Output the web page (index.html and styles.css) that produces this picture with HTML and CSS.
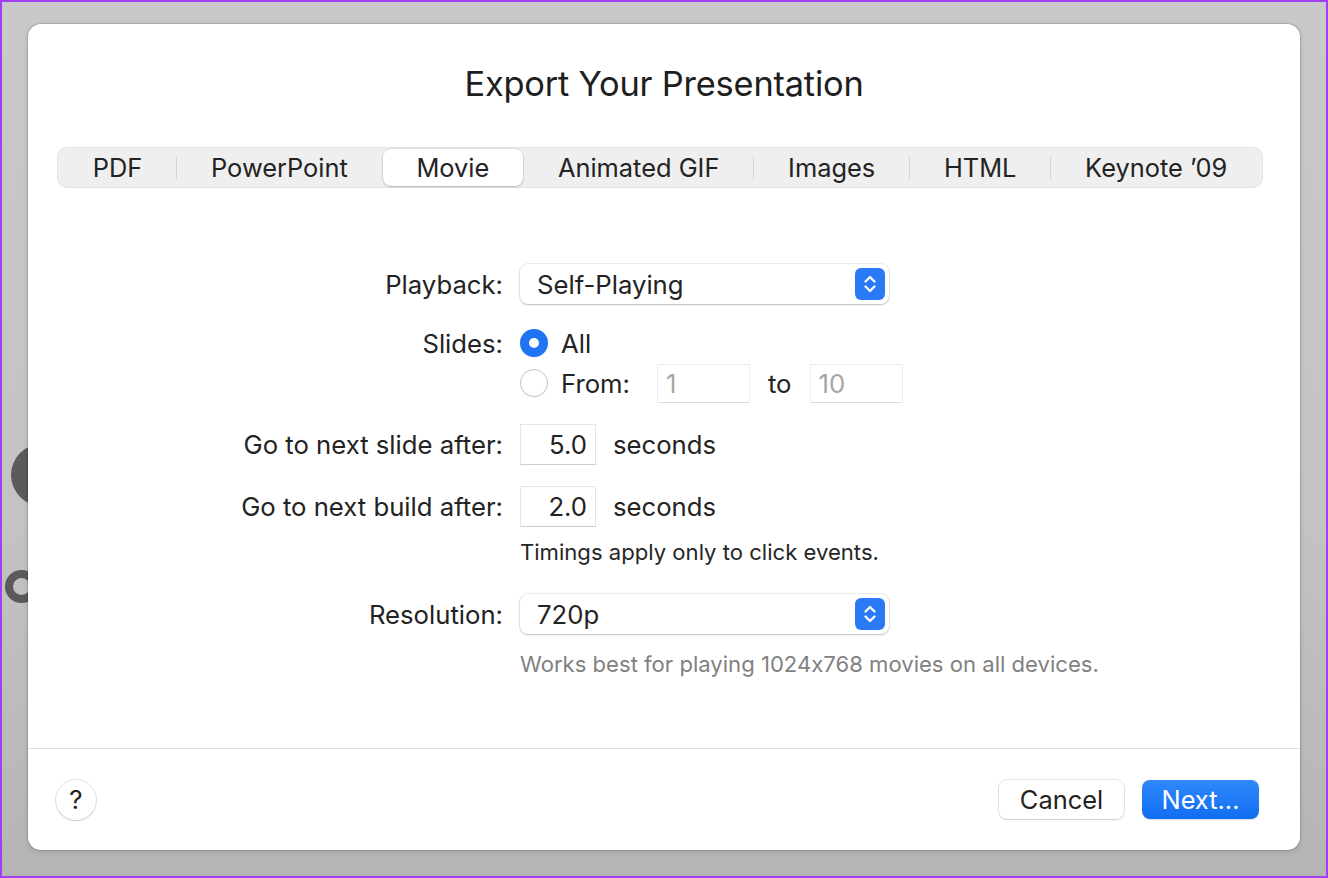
FILE: index.html
```html
<!DOCTYPE html>
<html lang="en">
<head>
<meta charset="utf-8">
<title>Export Your Presentation</title>
<link rel="stylesheet" href="styles.css">
</head>
<body>
<div class="screen">
  <div class="bg-dot"></div>
  <div class="bg-ring"></div>
  <div class="dialog">
    <h1 class="title">Export Your Presentation</h1>

    <div class="tabs">
      <div class="tab">PDF</div>
      <div class="sep"></div>
      <div class="tab">PowerPoint</div>
      <div class="sep sep-hidden"></div>
      <div class="tab tab-selected">Movie</div>
      <div class="sep sep-hidden"></div>
      <div class="tab">Animated GIF</div>
      <div class="sep"></div>
      <div class="tab">Images</div>
      <div class="sep"></div>
      <div class="tab">HTML</div>
      <div class="sep"></div>
      <div class="tab">Keynote ’09</div>
    </div>

    <div class="form">
      <div class="row row-popup">
        <div class="label">Playback:</div>
        <div class="popup">
          <span class="popup-text">Self-Playing</span>
          <svg class="popup-arrows" width="30" height="32" viewBox="0 0 30 32">
            <rect x="0" y="0" width="30" height="32" rx="6" fill="#2a7af5"/>
            <path d="M10.5 13.5 L15 9 L19.5 13.5" fill="none" stroke="#fff" stroke-width="2.3" stroke-linecap="round" stroke-linejoin="round"/>
            <path d="M10.5 18.5 L15 23 L19.5 18.5" fill="none" stroke="#fff" stroke-width="2.3" stroke-linecap="round" stroke-linejoin="round"/>
          </svg>
        </div>
      </div>

      <div class="row row-radio row-all">
        <div class="label">Slides:</div>
        <div class="radio radio-on"></div>
        <span class="radio-text">All</span>
      </div>

      <div class="row row-radio">
        <div class="label"></div>
        <div class="radio"></div>
        <span class="radio-text">From:</span>
        <div class="field field-range field-from field-disabled">1</div>
        <span class="to">to</span>
        <div class="field field-range field-disabled">10</div>
      </div>

      <div class="row row-field row-slide">
        <div class="label">Go to next slide after:</div>
        <div class="field field-num">5.0</div>
        <span class="unit">seconds</span>
      </div>

      <div class="row row-field row-build">
        <div class="label">Go to next build after:</div>
        <div class="field field-num">2.0</div>
        <span class="unit">seconds</span>
      </div>

      <p class="note note-dark">Timings apply only to click events.</p>

      <div class="row row-popup row-res">
        <div class="label">Resolution:</div>
        <div class="popup">
          <span class="popup-text">720p</span>
          <svg class="popup-arrows" width="30" height="32" viewBox="0 0 30 32">
            <rect x="0" y="0" width="30" height="32" rx="6" fill="#2a7af5"/>
            <path d="M10.5 13.5 L15 9 L19.5 13.5" fill="none" stroke="#fff" stroke-width="2.3" stroke-linecap="round" stroke-linejoin="round"/>
            <path d="M10.5 18.5 L15 23 L19.5 18.5" fill="none" stroke="#fff" stroke-width="2.3" stroke-linecap="round" stroke-linejoin="round"/>
          </svg>
        </div>
      </div>

      <p class="note note-gray">Works best for playing 1024x768 movies on all devices.</p>
    </div>

    <div class="footer">
      <div class="help">?</div>
      <div class="spacer"></div>
      <div class="btn btn-cancel">Cancel</div>
      <div class="btn btn-next">Next...</div>
    </div>
  </div>
</div>
</body>
</html>
```

FILE: styles.css
```css
* { box-sizing: border-box; }

html, body {
  margin: 0;
  padding: 0;
}

body {
  width: 1328px;
  height: 878px;
  overflow: hidden;
  font-family: "Inter", "Liberation Sans", sans-serif;
  font-feature-settings: "calt" 0;
  color: #232323;
}

.screen {
  position: relative;
  width: 1328px;
  height: 878px;
  border: 2px solid #a040f2;
  padding: 22px 0 0 26px;
  background: linear-gradient(to bottom, #c9c9c9 0%, #c3c3c3 60%, #b5b5b5 100%);
}

.bg-dot {
  position: absolute;
  left: 9px;
  top: 442px;
  width: 62px;
  height: 62px;
  border-radius: 50%;
  background: #5b5b5b;
}

.bg-ring {
  position: absolute;
  left: 3px;
  top: 568px;
  width: 33px;
  height: 33px;
  border-radius: 50%;
  border: 8px solid #5a5a5a;
}

.dialog {
  position: relative;
  z-index: 1;
  width: 1272px;
  height: 826px;
  background: #ffffff;
  border-radius: 13px;
  box-shadow: 0 0 0 1px rgba(0, 0, 0, 0.12), 0 2px 6px rgba(0, 0, 0, 0.12);
  display: flex;
  flex-direction: column;
}

.title {
  margin: 0;
  padding-top: 40px;
  height: 80px;
  font-size: 34.4px;
  line-height: 40px;
  font-weight: 400;
  text-align: center;
  color: #1e1e1e;
  letter-spacing: -0.2px;
}

.tabs {
  flex: none;
  margin: 43px 37px 0 29px;
  height: 41px;
  display: flex;
  align-items: center;
  background: #efefef;
  border: 1px solid #e3e3e3;
  border-radius: 10px;
  padding: 0 1px;
}

.tab {
  flex: 1 1 auto;
  padding: 0 29px;
  height: 37px;
  display: flex;
  align-items: center;
  justify-content: center;
  font-size: 25.4px;
  color: #232323;
  white-space: nowrap;
}

.tab-selected {
  background: #ffffff;
  border-radius: 8px;
  box-shadow: 0 0 0 0.5px rgba(0, 0, 0, 0.14), 0 1px 2px rgba(0, 0, 0, 0.18);
}

.sep {
  flex: none;
  width: 1px;
  height: 22px;
  background: #d2d2d2;
}

.sep-hidden {
  background: transparent;
}

.form {
  flex: 1;
  padding-top: 76px;
}

.row {
  display: flex;
  align-items: center;
  font-size: 25.7px;
}

.label {
  flex: none;
  width: 475px;
  margin-right: 17px;
  text-align: right;
  white-space: nowrap;
}

.row-popup { height: 40px; }
.row-radio { height: 40px; }
.row-all { margin-top: 19px; }
.row-field { height: 41px; margin-top: 21px; }
.row-res { margin-top: 30px; }

.popup {
  width: 369px;
  height: 40px;
  background: #ffffff;
  border-radius: 8px;
  box-shadow: 0 0 0 1px rgba(0, 0, 0, 0.07), 0 1px 2px rgba(0, 0, 0, 0.2);
  display: flex;
  align-items: center;
  padding: 0 4px 0 17px;
}

.popup-text {
  flex: 1;
}

.popup-arrows {
  flex: none;
  display: block;
}

.radio {
  flex: none;
  width: 28px;
  height: 28px;
  border-radius: 50%;
  background: #ffffff;
  border: 1px solid #c6c6c6;
  box-shadow: 0 0.5px 1px rgba(0, 0, 0, 0.08);
}

.radio-on {
  border: 9px solid #1f74f3;
  background: #ffffff;
}

.radio-text {
  margin-left: 13px;
}

.field {
  height: 41px;
  background: #ffffff;
  border: 1px solid #e6e6e6;
  border-bottom-color: #cdcdcd;
  display: flex;
  align-items: center;
}

.field-range {
  width: 93px;
  height: 39px;
  padding-left: 8px;
}

.field-from {
  margin-left: 27px;
}

.field-disabled {
  color: #a6a6a6;
  border-color: #eeeeee;
  border-bottom-color: #dcdcdc;
}

.to {
  margin: 0 18px;
}

.field-num {
  width: 76px;
  justify-content: flex-end;
  padding-right: 8px;
}

.unit {
  margin-left: 17px;
}

.note {
  margin: 0;
  padding-left: 492px;
  font-size: 22.1px;
  line-height: 24px;
}

.note-dark {
  margin-top: 13px;
  color: #262626;
}

.note-gray {
  margin-top: 18px;
  color: #818181;
}

.footer {
  flex: none;
  height: 102px;
  border-top: 1px solid #e0e0e0;
  display: flex;
  align-items: center;
  padding: 0 41px 0 28px;
}

.help {
  width: 40px;
  height: 40px;
  border-radius: 50%;
  background: #ffffff;
  box-shadow: 0 0 0 1px rgba(0, 0, 0, 0.1), 0 1px 2px rgba(0, 0, 0, 0.12);
  display: flex;
  align-items: center;
  justify-content: center;
  font-size: 26px;
  color: #222;
}

.spacer { flex: 1; }

.btn {
  height: 39px;
  border-radius: 8px;
  display: flex;
  align-items: center;
  justify-content: center;
  font-size: 25.4px;
}

.btn-cancel {
  width: 125px;
  background: #ffffff;
  box-shadow: 0 0 0 1px rgba(0, 0, 0, 0.1), 0 1px 2px rgba(0, 0, 0, 0.1);
  color: #232323;
}

.btn-next {
  width: 117px;
  margin-left: 18px;
  background: linear-gradient(to bottom, #2f88fb, #116ef1);
  color: #ffffff;
  box-shadow: 0 0.5px 1px rgba(0, 0, 0, 0.15);
}
```
